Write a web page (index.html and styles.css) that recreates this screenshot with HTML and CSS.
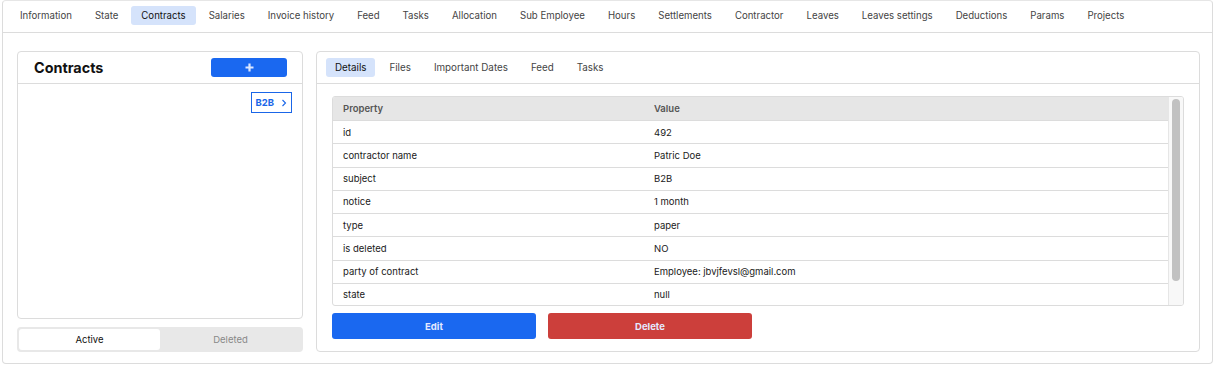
FILE: index.html
```html
<!DOCTYPE html>
<html lang="en">

<head>
    <meta charset="UTF-8">
    <meta name="viewport" content="width=device-width, initial-scale=1.0">
    <title>Employee - Contracts</title>
    <link rel="stylesheet" href="styles.css">
</head>

<body>

    <div class="page">
        <nav class="nav">
            <a class="tab">Information</a>
            <a class="tab">State</a>
            <a class="tab active">Contracts</a>
            <a class="tab">Salaries</a>
            <a class="tab">Invoice history</a>
            <a class="tab">Feed</a>
            <a class="tab">Tasks</a>
            <a class="tab">Allocation</a>
            <a class="tab">Sub Employee</a>
            <a class="tab">Hours</a>
            <a class="tab">Settlements</a>
            <a class="tab">Contractor</a>
            <a class="tab">Leaves</a>
            <a class="tab">Leaves settings</a>
            <a class="tab">Deductions</a>
            <a class="tab">Params</a>
            <a class="tab">Projects</a>
        </nav>

        <div class="content">
            <!-- list of contracts -->
            <div class="side">
                <div class="card list-card">
                    <div class="card-header">
                        <h2>Contracts</h2>
                        <button class="add-btn">
                            <svg width="9" height="9" viewBox="0 0 9 9"><path d="M4.5 0.5v8M0.5 4.5h8" stroke="#dbe6ff" stroke-width="2.2"/></svg>
                        </button>
                    </div>
                    <div class="list">
                        <a class="contract-item">B2B
                            <svg width="6" height="8" viewBox="0 0 6 8"><path d="M1.5 1l3 3-3 3" fill="none" stroke="#1a66e8" stroke-width="1.1"/></svg>
                        </a>
                    </div>
                </div>
                <div class="switch">
                    <div class="switch-item on">Active</div>
                    <div class="switch-item">Deleted</div>
                </div>
            </div>

            <!-- contract details -->
            <div class="card details">
                <div class="sub-nav">
                    <a class="tab active">Details</a>
                    <a class="tab">Files</a>
                    <a class="tab">Important Dates</a>
                    <a class="tab">Feed</a>
                    <a class="tab">Tasks</a>
                </div>
                <div class="details-body">
                    <div class="table-wrap">
                        <div class="table-scroll">
                            <table>
                                <thead>
                                    <tr><th class="prop">Property</th><th>Value</th></tr>
                                </thead>
                                <tbody>
                                    <tr><td>id</td><td>492</td></tr>
                                    <tr><td>contractor name</td><td>Patric Doe</td></tr>
                                    <tr><td>subject</td><td>B2B</td></tr>
                                    <tr><td>notice</td><td>1 month</td></tr>
                                    <tr><td>type</td><td>paper</td></tr>
                                    <tr><td>is deleted</td><td>NO</td></tr>
                                    <tr><td>party of contract</td><td>Employee: jbvjfevsl@gmail.com</td></tr>
                                    <tr><td>state</td><td>null</td></tr>
                                </tbody>
                            </table>
                        </div>
                        <div class="scrollbar"><div class="thumb"></div></div>
                    </div>
                    <div class="actions">
                        <button class="btn btn-edit">Edit</button>
                        <button class="btn btn-delete">Delete</button>
                    </div>
                </div>
            </div>
        </div>
    </div>

</body>

</html>
```

FILE: styles.css
```css
body {
    margin: 0;
    font-family: 'Inter', 'Noto Sans', sans-serif;
    font-size: 9.5px;
    color: #222;
    background-color: #ffffff;
}

.page {
    margin: 0 2px;
    height: 362px;
    border: 1px solid #dcdcdc;
    border-top-color: #e6e6e6;
    border-radius: 4px;
    display: flex;
    flex-direction: column;
}

.nav {
    display: flex;
    align-items: center;
    gap: 3px;
    height: 29px;
    padding: 0 0 2px 7px;
    border-bottom: 1px solid #dcdcdc;
    font-size: 9.65px;
}

.tab {
    display: flex;
    align-items: center;
    height: 19px;
    padding: 0 10px;
    border-radius: 3px;
    color: #444;
    cursor: pointer;
}

.tab.active {
    background-color: #d5e3fb;
    color: #111;
}

.content {
    flex: 1;
    display: flex;
    gap: 13px;
    padding: 18px 12px 11px 14px;
}

.side {
    width: 286px;
    display: flex;
    flex-direction: column;
    gap: 8px;
}

.card {
    border: 1px solid #dcdcdc;
    border-radius: 4px;
    background-color: #fff;
}

.list-card {
    flex: 1;
}

.card-header {
    height: 31px;
    display: flex;
    align-items: center;
    justify-content: space-between;
    padding: 0 15px 0 16px;
    border-bottom: 1px solid #dcdcdc;
}

.card-header h2 {
    margin: 0;
    font-size: 14.4px;
    font-weight: 700;
    color: #111;
}

.add-btn {
    width: 76px;
    height: 19px;
    margin-top: -1px;
    border: none;
    border-radius: 3px;
    background-color: #1a68f0;
    display: flex;
    align-items: center;
    justify-content: center;
    cursor: pointer;
}

.list {
    display: flex;
    justify-content: flex-end;
    padding: 8px 10px 0 0;
}

.contract-item {
    display: flex;
    align-items: center;
    gap: 7px;
    height: 19px;
    padding: 0 4px 0 3px;
    border: 1px solid #1a66e8;
    color: #1a66e8;
    font-weight: 700;
    font-size: 9.5px;
    cursor: pointer;
}

.switch {
    display: flex;
    height: 21px;
    padding: 2px;
    border-radius: 4px;
    background-color: #e8e8e8;
}

.switch-item {
    flex: 1;
    display: flex;
    align-items: center;
    justify-content: center;
    border-radius: 3px;
    color: #888;
}

.switch-item.on {
    background-color: #fff;
    color: #111;
}

.details {
    flex: 1;
    display: flex;
    flex-direction: column;
}

.sub-nav {
    display: flex;
    align-items: center;
    gap: 5px;
    height: 31px;
    padding-left: 9px;
    border-bottom: 1px solid #dcdcdc;
    font-size: 9.8px;
}

.sub-nav .tab {
    padding: 0 9px;
}

.details-body {
    padding: 12px 15px 0;
}

.table-wrap {
    display: flex;
    height: 208px;
    border: 1px solid #dcdcdc;
    border-radius: 3px;
    overflow: hidden;
}

.table-scroll {
    flex: 1;
    overflow: hidden;
}

.scrollbar {
    width: 14px;
    background-color: #f8f8f8;
    border-left: 1px solid #e6e6e6;
}

.thumb {
    width: 8px;
    height: 182px;
    margin: 2px 0 0 3px;
    border-radius: 4px;
    background-color: #c1c1c1;
}

table {
    width: 100%;
    border-collapse: collapse;
}

th,
td {
    text-align: left;
    padding: 0 10px;
    border-bottom: 1px solid #dcdcdc;
}

th {
    height: 23px;
    background-color: #e6e6e6;
    color: #555;
    font-weight: 600;
}

td {
    height: 22.25px;
    color: #1a1a1a;
}

th.prop {
    width: 291px;
}

.actions {
    display: flex;
    gap: 12px;
    margin-top: 7px;
}

.btn {
    width: 204px;
    height: 26px;
    border: none;
    border-radius: 3px;
    font-family: inherit;
    font-size: 9.5px;
    font-weight: 700;
    color: #e4e9ff;
    cursor: pointer;
}

.btn-edit {
    background-color: #1a68f0;
}

.btn-delete {
    background-color: #cc3f3b;
}
```
